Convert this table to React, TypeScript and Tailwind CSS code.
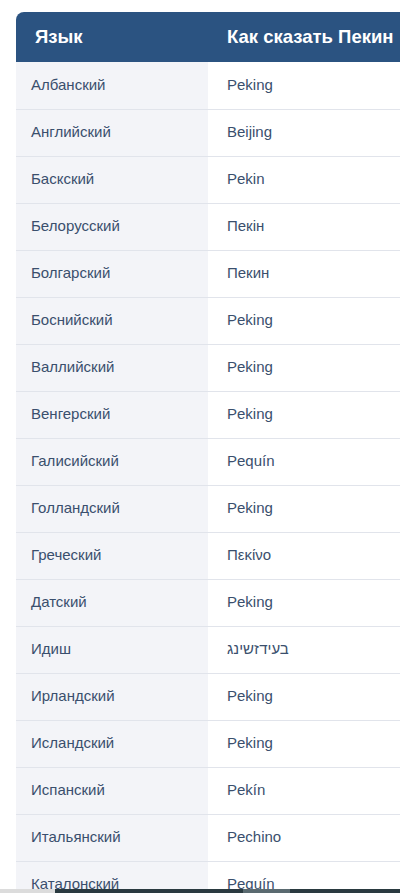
const rows: [string, string][] = [
  ["Албанский", "Peking"],
  ["Английский", "Beijing"],
  ["Баскский", "Pekin"],
  ["Белорусский", "Пекін"],
  ["Болгарский", "Пекин"],
  ["Боснийский", "Peking"],
  ["Валлийский", "Peking"],
  ["Венгерский", "Peking"],
  ["Галисийский", "Pequín"],
  ["Голландский", "Peking"],
  ["Греческий", "Πεκίνο"],
  ["Датский", "Peking"],
  ["Идиш", "בעידזשינג"],
  ["Ирландский", "Peking"],
  ["Исландский", "Peking"],
  ["Испанский", "Pekín"],
  ["Итальянский", "Pechino"],
  ["Каталонский", "Pequín"],
  ["Корейский", "베이징"],
];

export default function App() {
  return (
    <div
      className="h-[893px] w-[400px] overflow-hidden bg-white pl-4 pt-3"
      style={{ fontFamily: '"Liberation Sans", Arial, "Noto Sans CJK KR", sans-serif' }}
    >
      <table className="w-[560px] border-collapse text-left">
        <thead>
          <tr className="bg-[#2b5381] text-white">
            <th className="h-[50px] w-[192px] rounded-tl-lg pl-[19px] text-[18.5px] font-bold">Язык</th>
            <th className="h-[50px] pl-[19px] text-[18.5px] font-bold">Как сказать Пекин</th>
          </tr>
        </thead>
        <tbody>
          {rows.map(([lang, word]) => (
            <tr key={lang} className="border-b border-[#e1e4eb]">
              <td className="h-[47px] bg-[#f3f4f8] pl-[15px] text-[15px] text-[#3a4f6d]">{lang}</td>
              <td className="h-[47px] bg-white pl-[19px] text-[15px] text-[#3a4f6d]">
                <span dir="auto">{word}</span>
              </td>
            </tr>
          ))}
        </tbody>
      </table>
      <div className="fixed bottom-0 left-0 flex h-[4px] w-[400px]">
        <div className="w-[55px] bg-[#dcdcdc]" />
        <div className="w-[188px] bg-[#2a3a40]" />
        <div className="w-[47px] bg-[#5a6a70]" />
        <div className="flex-1 bg-[#2a3a40]" />
      </div>
    </div>
  );
}
